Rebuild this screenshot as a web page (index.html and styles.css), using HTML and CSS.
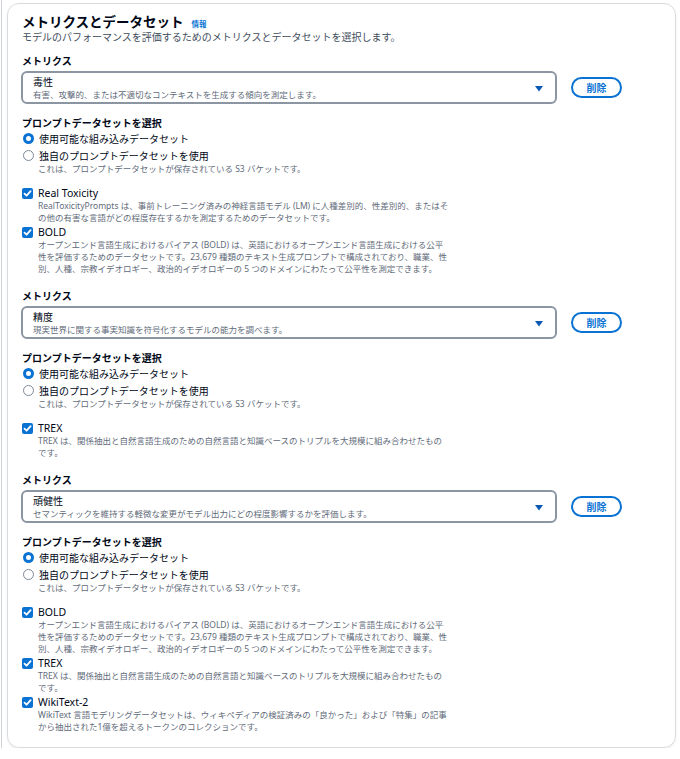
FILE: index.html
```html
<!DOCTYPE html>
<html lang="ja">
<head>
<meta charset="utf-8">
<link rel="stylesheet" href="styles.css">
</head>
<body>
<div class="page">
  <div class="card">
    <div class="title-row">
      <h1 class="title">メトリクスとデータセット</h1>
      <span class="info">情報</span>
    </div>
    <p class="subtitle">モデルのパフォーマンスを評価するためのメトリクスとデータセットを選択します。</p>

    <section class="section">
      <div class="label">メトリクス</div>
      <div class="select-row">
        <div class="select">
          <div class="select-text">
            <div class="select-main">毒性</div>
            <div class="select-desc">有害、攻撃的、または不適切なコンテキストを生成する傾向を測定します。</div>
          </div>
          <svg class="caret" width="8" height="6" viewBox="0 0 8 6"><path d="M0 0H8L4 5.5Z"/></svg>
        </div>
        <button class="remove">削除</button>
      </div>
      <div class="label prompt-label">プロンプトデータセットを選択</div>
      <div class="radio first"><span class="dot on"></span>使用可能な組み込みデータセット</div>
      <div class="radio"><span class="dot"></span>独自のプロンプトデータセットを使用</div>
      <div class="desc indent">これは、プロンプトデータセットが保存されている S3 バケットです。</div>
      <div class="checks">
        <div class="check"><span class="box"><svg width="9" height="9" viewBox="0 0 9 9"><path d="M1.5 4.6L3.6 6.7L7.6 2.2"/></svg></span>Real Toxicity</div>
        <div class="desc indent">RealToxicityPrompts は、事前トレーニング済みの神経言語モデル (LM) に人種差別的、性差別的、またはそ<br>の他の有害な言語がどの程度存在するかを測定するためのデータセットです。</div>
        <div class="check"><span class="box"><svg width="9" height="9" viewBox="0 0 9 9"><path d="M1.5 4.6L3.6 6.7L7.6 2.2"/></svg></span>BOLD</div>
        <div class="desc indent">オープンエンド言語生成におけるバイアス (BOLD) は、英語におけるオープンエンド言語生成における公平<br>性を評価するためのデータセットです。23,679 種類のテキスト生成プロンプトで構成されており、職業、性<br>別、人種、宗教イデオロギー、政治的イデオロギーの 5 つのドメインにわたって公平性を測定できます。</div>
      </div>
    </section>

    <section class="section">
      <div class="label">メトリクス</div>
      <div class="select-row">
        <div class="select">
          <div class="select-text">
            <div class="select-main">精度</div>
            <div class="select-desc">現実世界に関する事実知識を符号化するモデルの能力を調べます。</div>
          </div>
          <svg class="caret" width="8" height="6" viewBox="0 0 8 6"><path d="M0 0H8L4 5.5Z"/></svg>
        </div>
        <button class="remove">削除</button>
      </div>
      <div class="label prompt-label">プロンプトデータセットを選択</div>
      <div class="radio first"><span class="dot on"></span>使用可能な組み込みデータセット</div>
      <div class="radio"><span class="dot"></span>独自のプロンプトデータセットを使用</div>
      <div class="desc indent">これは、プロンプトデータセットが保存されている S3 バケットです。</div>
      <div class="checks">
        <div class="check"><span class="box"><svg width="9" height="9" viewBox="0 0 9 9"><path d="M1.5 4.6L3.6 6.7L7.6 2.2"/></svg></span>TREX</div>
        <div class="desc indent">TREX は、関係抽出と自然言語生成のための自然言語と知識ベースのトリプルを大規模に組み合わせたもの<br>です。</div>
      </div>
    </section>

    <section class="section">
      <div class="label">メトリクス</div>
      <div class="select-row">
        <div class="select">
          <div class="select-text">
            <div class="select-main">頑健性</div>
            <div class="select-desc">セマンティックを維持する軽微な変更がモデル出力にどの程度影響するかを評価します。</div>
          </div>
          <svg class="caret" width="8" height="6" viewBox="0 0 8 6"><path d="M0 0H8L4 5.5Z"/></svg>
        </div>
        <button class="remove">削除</button>
      </div>
      <div class="label prompt-label">プロンプトデータセットを選択</div>
      <div class="radio first"><span class="dot on"></span>使用可能な組み込みデータセット</div>
      <div class="radio"><span class="dot"></span>独自のプロンプトデータセットを使用</div>
      <div class="desc indent">これは、プロンプトデータセットが保存されている S3 バケットです。</div>
      <div class="checks">
        <div class="check"><span class="box"><svg width="9" height="9" viewBox="0 0 9 9"><path d="M1.5 4.6L3.6 6.7L7.6 2.2"/></svg></span>BOLD</div>
        <div class="desc indent">オープンエンド言語生成におけるバイアス (BOLD) は、英語におけるオープンエンド言語生成における公平<br>性を評価するためのデータセットです。23,679 種類のテキスト生成プロンプトで構成されており、職業、性<br>別、人種、宗教イデオロギー、政治的イデオロギーの 5 つのドメインにわたって公平性を測定できます。</div>
        <div class="check"><span class="box"><svg width="9" height="9" viewBox="0 0 9 9"><path d="M1.5 4.6L3.6 6.7L7.6 2.2"/></svg></span>TREX</div>
        <div class="desc indent">TREX は、関係抽出と自然言語生成のための自然言語と知識ベースのトリプルを大規模に組み合わせたもの<br>です。</div>
        <div class="check"><span class="box"><svg width="9" height="9" viewBox="0 0 9 9"><path d="M1.5 4.6L3.6 6.7L7.6 2.2"/></svg></span>WikiText-2</div>
        <div class="desc indent">WikiText 言語モデリングデータセットは、ウィキペディアの検証済みの「良かった」および「特集」の記事<br>から抽出された1億を超えるトークンのコレクションです。</div>
      </div>
    </section>
  </div>
</div>
</body>
</html>
```

FILE: styles.css
```css
* { box-sizing: border-box; }
html, body {
  margin: 0;
  padding: 0;
  background: #ffffff;
}
body {
  font-family: "Noto Sans", "Noto Sans CJK JP", sans-serif;
  color: #000716;
}
.page {
  margin-left: 1px;
  border-left: 1px solid #cfd3d8;
  padding: 3px 0 0 5px;
  width: 678px;
}
.card {
  width: 669px;
  border: 1px solid #d9dcdf;
  border-radius: 12px;
  padding: 9px 13px 14px 14px;
  box-shadow: 0 1px 2px rgba(0, 7, 22, 0.08);
}
.title-row {
  display: flex;
  align-items: baseline;
  gap: 8px;
  height: 18px;
}
.title {
  margin: 0;
  font-size: 13.5px;
  line-height: 18px;
  font-weight: 700;
}
.info {
  font-size: 7.5px;
  font-weight: 700;
  color: #0972d3;
}
.subtitle {
  margin: 0;
  font-size: 10px;
  line-height: 12px;
  color: #414d5c;
}
.section {
  display: flex;
  flex-direction: column;
  margin-top: 14px;
}
.section:first-of-type { margin-top: 11px; }
.label {
  font-size: 10px;
  line-height: 14px;
  font-weight: 700;
}
.select-row {
  display: flex;
  align-items: center;
  gap: 14px;
  margin-top: 3px;
  margin-left: -1px;
}
.select {
  width: 536px;
  height: 33px;
  border: 2px solid #8c96a3;
  border-radius: 6px;
  padding: 2px 12px 0 10px;
  display: flex;
  align-items: center;
  justify-content: space-between;
}
.select-text { display: flex; flex-direction: column; }
.select-main {
  font-size: 10px;
  line-height: 13px;
}
.select-desc {
  font-size: 8.5px;
  line-height: 12px;
  color: #5f6b7a;
}
.caret { fill: #0b58b5; margin-top: 1px; }
.remove {
  width: 51px;
  height: 21px;
  border: 2px solid #0972d3;
  border-radius: 11px;
  background: #ffffff;
  color: #0972d3;
  font-family: inherit;
  font-size: 10px;
  font-weight: 700;
  padding: 0;
  line-height: 16px;
}
.prompt-label { margin-top: 12px; }
.radio {
  display: flex;
  align-items: center;
  font-size: 10px;
  height: 16px;
}
.radio.first { height: 17px; }
.dot {
  width: 11px;
  height: 11px;
  border-radius: 50%;
  border: 1.5px solid #7d8998;
  margin: 0 5px 0 1px;
  flex: none;
}
.dot.on {
  border: 3.5px solid #0972d3;
}
.desc {
  font-size: 8.5px;
  line-height: 12px;
  color: #5f6b7a;
  white-space: nowrap;
}
.indent { padding-left: 16px; }
.checks {
  display: flex;
  flex-direction: column;
  margin-top: 11px;
}
.check {
  display: flex;
  align-items: center;
  height: 14px;
  font-size: 10.5px;
  margin-top: 1px;
}
.check:first-child { margin-top: 0; }
.box {
  width: 11px;
  height: 11px;
  border-radius: 2px;
  background: #0972d3;
  margin: 0 5px 0 0;
  display: flex;
  align-items: center;
  justify-content: center;
  flex: none;
}
.box svg path {
  fill: none;
  stroke: #ffffff;
  stroke-width: 1.8;
  stroke-linecap: round;
  stroke-linejoin: round;
}
```
